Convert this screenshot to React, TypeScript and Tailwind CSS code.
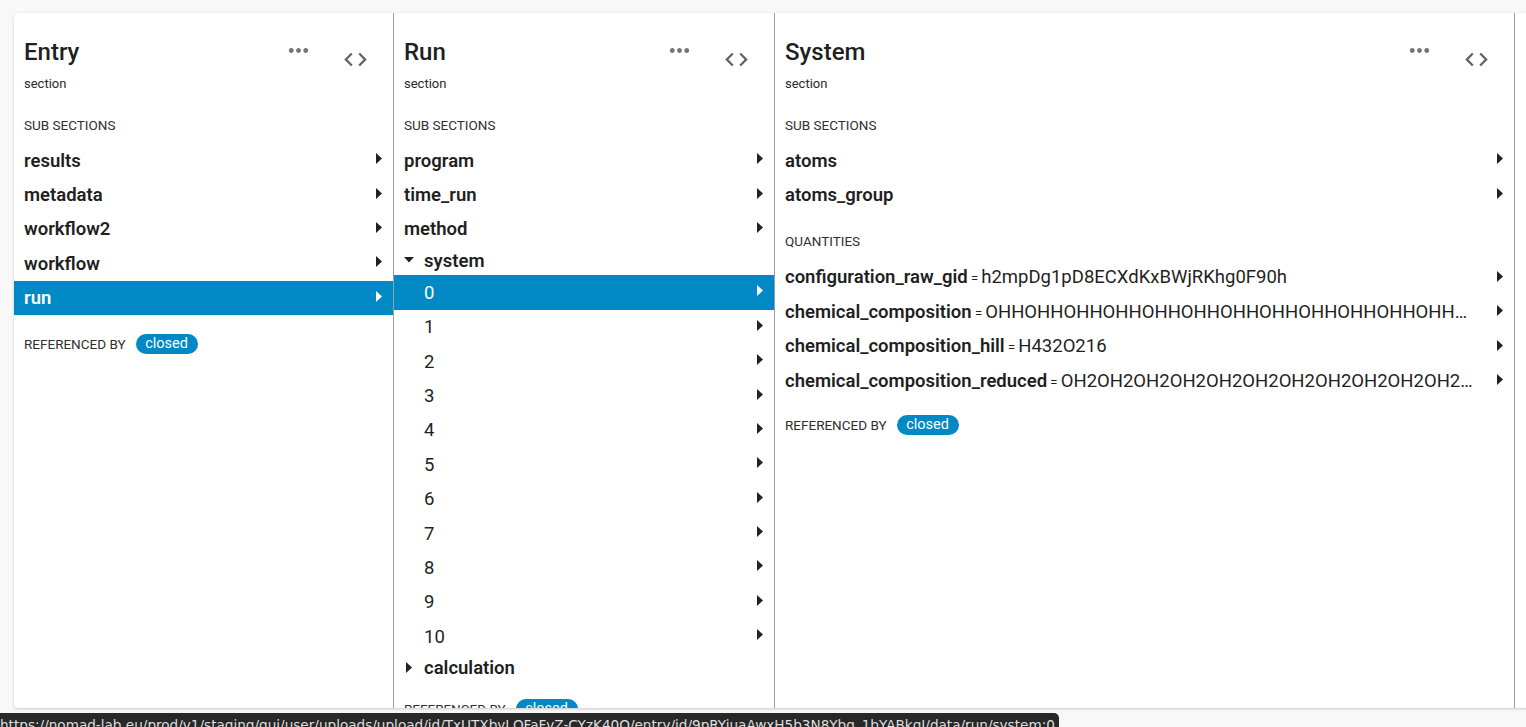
import React from "react";

const BLUE = "bg-[#0089c4]";

function Dots() {
  return (
    <svg width="29" height="29" viewBox="0 0 24 24" className="shrink-0 text-[#757575]" fill="currentColor">
      <path d="M6 10c-1.1 0-2 .9-2 2s.9 2 2 2 2-.9 2-2-.9-2-2-2zm12 0c-1.1 0-2 .9-2 2s.9 2 2 2 2-.9 2-2-.9-2-2-2zm-6 0c-1.1 0-2 .9-2 2s.9 2 2 2 2-.9 2-2-.9-2-2-2z" />
    </svg>
  );
}

function CodeIcon() {
  return (
    <svg width="27" height="27" viewBox="0 0 24 24" className="shrink-0 mt-[10px] ml-[29px] text-[#616161]" fill="currentColor">
      <path d="M9.4 16.6L4.8 12l4.6-4.6L8 6l-6 6 6 6 1.4-1.4zm5.2 0l4.6-4.6-4.6-4.6L16 6l6 6-6 6-1.4-1.4z" />
    </svg>
  );
}

function RightTri({ white = false }: { white?: boolean }) {
  return (
    <svg width="6" height="11" viewBox="0 0 6 11" className={"shrink-0 mb-[3px] " + (white ? "text-white" : "text-[#212121]")} fill="currentColor">
      <polygon points="0,0 6,5.5 0,11" />
    </svg>
  );
}

function Header({ title }: { title: string }) {
  return (
    <div className="flex items-start pl-[10px] pr-[24px] pt-[23px]">
      <div className="flex-1 min-w-0">
        <div className="text-[24px] leading-[32px] font-medium text-[#1f1f1f]">{title}</div>
        <div className="mt-[6px] text-[13px] leading-[20px] text-[#2a2a2a]">section</div>
      </div>
      <Dots />
      <CodeIcon />
    </div>
  );
}

function Label({ children, first = false, mb = "mb-[8px]" }: { children: React.ReactNode; first?: boolean; mb?: string }) {
  return (
    <div className={(first ? "mt-[21px] " : "mt-[19px] ") + mb + " pl-[10px] h-[20px] leading-[20px] text-[13.5px] uppercase text-[#2f2f2f]"}>
      {children}
    </div>
  );
}

function Row({
  name,
  selected = false,
  indent = false,
  bold = true,
}: {
  name: string;
  selected?: boolean;
  indent?: boolean;
  bold?: boolean;
}) {
  return (
    <div
      className={
        "flex items-center h-[34.4px] pr-[11px] " +
        (indent ? "pl-[30px] " : "pl-[10px] ") +
        (selected ? BLUE + " text-white" : "text-[#1f1f1f]")
      }
    >
      <div className={"flex-1 text-[18.5px] leading-[24px] pt-[1px] " + (bold ? "font-semibold" : "font-normal")}>{name}</div>
      <RightTri white={selected} />
    </div>
  );
}

function GroupRow({ name, open }: { name: string; open: boolean }) {
  return (
    <div className="flex items-center h-[29px] pl-[10px] text-[#1f1f1f]">
      <div className="w-[20px] flex items-center">
        {open ? (
          <svg width="10" height="6" viewBox="0 0 10 6" className="text-[#212121] mb-[1px]" fill="currentColor">
            <polygon points="0,0 10,0 5,5.5" />
          </svg>
        ) : (
          <svg width="6" height="11" viewBox="0 0 6 11" className="ml-[2px] text-[#212121]" fill="currentColor">
            <polygon points="0,0 6,5.5 0,11" />
          </svg>
        )}
      </div>
      <div className="text-[18.5px] leading-[24px] font-semibold">{name}</div>
    </div>
  );
}

function QRow({ name, value }: { name: string; value: string }) {
  return (
    <div className="flex items-center h-[34.4px] pl-[10px] pr-[11px] text-[#1f1f1f]">
      <div className="flex-1 min-w-0 pr-[20px] pt-[1px] truncate text-[18.5px] leading-[24px]">
        <span className="font-semibold">{name}</span>
        <span className="text-[13px]"> = </span>
        <span>{value}</span>
      </div>
      <RightTri />
    </div>
  );
}

function RefBy({ mt = "mt-[19px]" }: { mt?: string }) {
  return (
    <div className={mt + " pl-[10px] flex items-center h-[20px]"}>
      <span className="text-[13.5px] uppercase text-[#2f2f2f]">Referenced by</span>
      <span className={"ml-[10px] h-[20px] w-[62px] rounded-full text-white text-[14.5px] leading-[20px] text-center " + BLUE}>
        closed
      </span>
    </div>
  );
}

export default function App() {
  const comp = "OHH".repeat(120);
  const reduced = "OH2".repeat(120);
  return (
    <div
      className="relative w-[1526px] h-[727px] overflow-hidden bg-[#f8f8f8] pt-[13px] pl-[14px]"
      style={{ fontFamily: "Roboto, 'Liberation Sans', sans-serif" }}
    >
      <div className="flex h-[695px] w-[1600px] bg-white rounded-[4px] shadow-[0_1px_3px_rgba(0,0,0,0.18)] overflow-hidden">
        {/* Column 1 */}
        <div className="w-[380px] shrink-0 border-r border-[#9e9e9e]">
          <Header title="Entry" />
          <Label first>Sub sections</Label>
          <Row name="results" />
          <Row name="metadata" />
          <Row name="workflow2" />
          <Row name="workflow" />
          <Row name="run" selected />
          <RefBy />
        </div>
        {/* Column 2 */}
        <div className="w-[381px] shrink-0 border-r border-[#9e9e9e]">
          <Header title="Run" />
          <Label first>Sub sections</Label>
          <Row name="program" />
          <Row name="time_run" />
          <Row name="method" />
          <GroupRow name="system" open />
          <Row name="0" indent bold={false} selected />
          {["1", "2", "3", "4", "5", "6", "7", "8", "9", "10"].map((n) => (
            <Row key={n} name={n} indent bold={false} />
          ))}
          <GroupRow name="calculation" open={false} />
          <RefBy mt="mt-[17px]" />
        </div>
        {/* Column 3 */}
        <div className="w-[740px] shrink-0 border-r border-[#9e9e9e]">
          <Header title="System" />
          <Label first>Sub sections</Label>
          <Row name="atoms" />
          <Row name="atoms_group" />
          <Label mb="mb-[10px]">Quantities</Label>
          <QRow name="configuration_raw_gid" value="h2mpDg1pD8ECXdKxBWjRKhg0F90h" />
          <QRow name="chemical_composition" value={comp} />
          <QRow name="chemical_composition_hill" value="H432O216" />
          <QRow name="chemical_composition_reduced" value={reduced} />
          <RefBy mt="mt-[17px]" />
        </div>
        <div className="flex-1" />
      </div>
      <div
        className="absolute left-0 top-[713px] h-[22px] pr-[4px] bg-[#282828] rounded-tr-[5px] text-[#dedede] text-[13.6px] leading-[24px] whitespace-nowrap"
        style={{ fontFamily: "'DejaVu Sans', sans-serif" }}
      >
        https://nomad-lab.eu/prod/v1/staging/gui/user/uploads/upload/id/TxUTXbyLQFaFvZ-CYzK40Q/entry/id/9pRYiuaAwxH5b3N8Ybq_1bYABkqJ/data/run/system:0
      </div>
    </div>
  );
}
